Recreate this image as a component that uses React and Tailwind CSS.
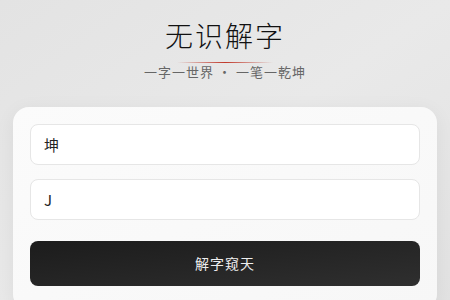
import React, { useState } from 'react';

const App = () => {
  const [char, setChar] = useState('坤');
  const [code, setCode] = useState('J');

  return (
    <div
      className="min-h-screen w-full bg-gradient-to-br from-[#e3e3e3] via-[#e9e9e9] to-[#e2e2e2] px-[13px] pt-[18px] flex flex-col items-center"
      style={{ fontFamily: '"Noto Sans CJK SC", "Noto Sans", sans-serif' }}
    >
      {/* Header */}
      <h1 className="text-[28px] leading-[34px] font-light tracking-[2px] text-[#111]">
        无识解字
      </h1>
      <div className="mt-[10px] h-px w-24 bg-gradient-to-r from-transparent via-[#c0392b] to-transparent" />
      <p className="mt-px text-[13px] leading-4 tracking-[1px] text-[#666]">
        一字一世界 · 一笔一乾坤
      </p>

      {/* Form card */}
      <div className="mt-[27px] w-full rounded-2xl bg-gradient-to-br from-[#fbfbfb] to-[#f7f7f7] shadow-[0_4px_20px_rgba(0,0,0,0.06)] px-[17px] pt-[17px] pb-6">
        <div className="flex flex-col gap-[14px]">
          <input
            value={char}
            onChange={(e) => setChar(e.target.value)}
            className="h-[41px] w-full rounded-lg border border-[#e6e6e6] bg-white px-[13px] text-[15px] text-[#222] outline-none"
          />
          <input
            value={code}
            onChange={(e) => setCode(e.target.value)}
            className="h-[41px] w-full rounded-lg border border-[#e6e6e6] bg-white px-[13px] text-[15px] text-[#222] outline-none"
          />
        </div>
        <button className="mt-[21px] h-[45px] w-full rounded-lg bg-gradient-to-br from-[#1c1c1c] to-[#2f2f2f] text-[14px] tracking-[1px] text-[#eeeeee]">
          解字窥天
        </button>
      </div>
    </div>
  );
};

export default App;
